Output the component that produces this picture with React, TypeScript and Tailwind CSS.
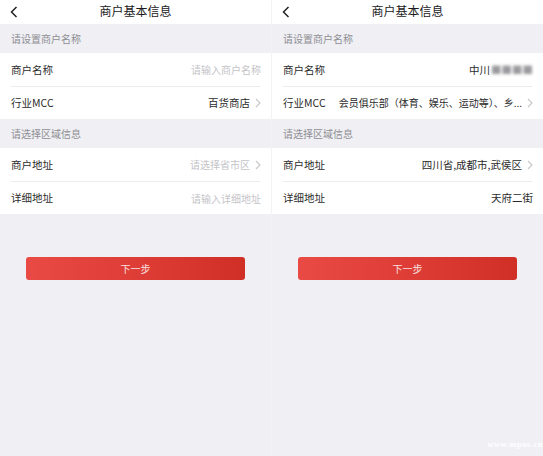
import React from 'react';

const font = { fontFamily: '"Noto Sans CJK SC", "Noto Sans", sans-serif' };

function Chevron() {
  return (
    <svg className="ml-[5px] shrink-0" width="6" height="10" viewBox="0 0 6 10" fill="none">
      <polyline points="1,1 5,5 1,9" stroke="#c7c7cc" strokeWidth="1.1" />
    </svg>
  );
}

function BackIcon() {
  return (
    <svg width="8" height="12" viewBox="0 0 8 12" fill="none">
      <polyline points="6.5,1 1.5,6 6.5,11" stroke="#222" strokeWidth="1.5" />
    </svg>
  );
}

interface RowProps {
  label: string;
  value?: React.ReactNode;
  placeholder?: string;
  arrow?: boolean;
  divider?: boolean;
  height: string;
}

function Row({ label, value, placeholder, arrow, divider, height }: RowProps) {
  return (
    <div className={`bg-white ${height} flex flex-col`}>
      <div className="flex-1 flex items-center pl-[11px] pr-[10px]">
        <span className="text-[10.5px] text-[#2b2b2b] shrink-0">{label}</span>
        <div className="flex-1 flex items-center justify-end min-w-0 ml-2">
          {value ? (
            <span className="text-[10.5px] text-[#2b2b2b] whitespace-nowrap">{value}</span>
          ) : (
            <span className="text-[10px] text-[#c4c4c8] whitespace-nowrap">{placeholder}</span>
          )}
          {arrow && <Chevron />}
        </div>
      </div>
      {divider && <div className="mx-[11px] h-px bg-[#ececef]" />}
    </div>
  );
}

function SectionHeader({ text, height }: { text: string; height: string }) {
  return (
    <div className={`${height} flex items-center pl-[11px] text-[10px] text-[#8e8e93]`}>{text}</div>
  );
}

interface ScreenProps {
  width: string;
  name?: React.ReactNode;
  mcc?: React.ReactNode;
  address?: string;
  detail?: string;
}

function Screen({ width, name, mcc, address, detail }: ScreenProps) {
  return (
    <div className={`${width} h-[456px] bg-[#efeff4] flex flex-col`}>
      <div className="h-[24px] bg-white flex items-center relative">
        <div className="absolute left-[10px] top-[6px]">
          <BackIcon />
        </div>
        <div className="flex-1 text-center text-[12px] text-[#1a1a1a] -mt-[2px]">商户基本信息</div>
      </div>
      <SectionHeader text="请设置商户名称" height="h-[29px]" />
      <Row label="商户名称" value={name} placeholder="请输入商户名称" divider height="h-[34px]" />
      <Row label="行业MCC" value={mcc} arrow height="h-[32px]" />
      <SectionHeader text="请选择区域信息" height="h-[29px]" />
      <Row label="商户地址" value={address} placeholder="请选择省市区" arrow divider height="h-[34px]" />
      <Row label="详细地址" value={detail} placeholder="请输入详细地址" height="h-[32px]" />
      <div className="px-[26px] pt-[40px]">
        <button className="w-full h-[23px] rounded-[3px] bg-gradient-to-r from-[#ea4a44] to-[#d02f26] text-[10px] text-white/85">
          下一步
        </button>
      </div>
    </div>
  );
}

export default function App() {
  return (
    <div className="w-[543px] h-[456px] flex overflow-hidden relative" style={font}>
      <Screen width="w-[271px]" mcc="百货商店" />
      <div className="w-px h-[456px] bg-[#f3f3f6]" />
      <Screen
        width="w-[271px]"
        name={
          <span className="inline-flex items-center">
            中川
            <span className="blur-[1.5px] text-[#9a9a9e] ml-[1px]">■■■■</span>
          </span>
        }
        mcc={<span className="text-[10px]">会员俱乐部（体育、娱乐、运动等）、乡...</span>}
        address="四川省,成都市,武侯区"
        detail="天府二街"
      />
      <div
        className="absolute right-0 bottom-[5px] text-[8.5px] text-white font-bold tracking-[0.5px]"
        style={{ fontFamily: '"Liberation Serif", serif' }}
      >
        www.mpos.cn
      </div>
    </div>
  );
}
